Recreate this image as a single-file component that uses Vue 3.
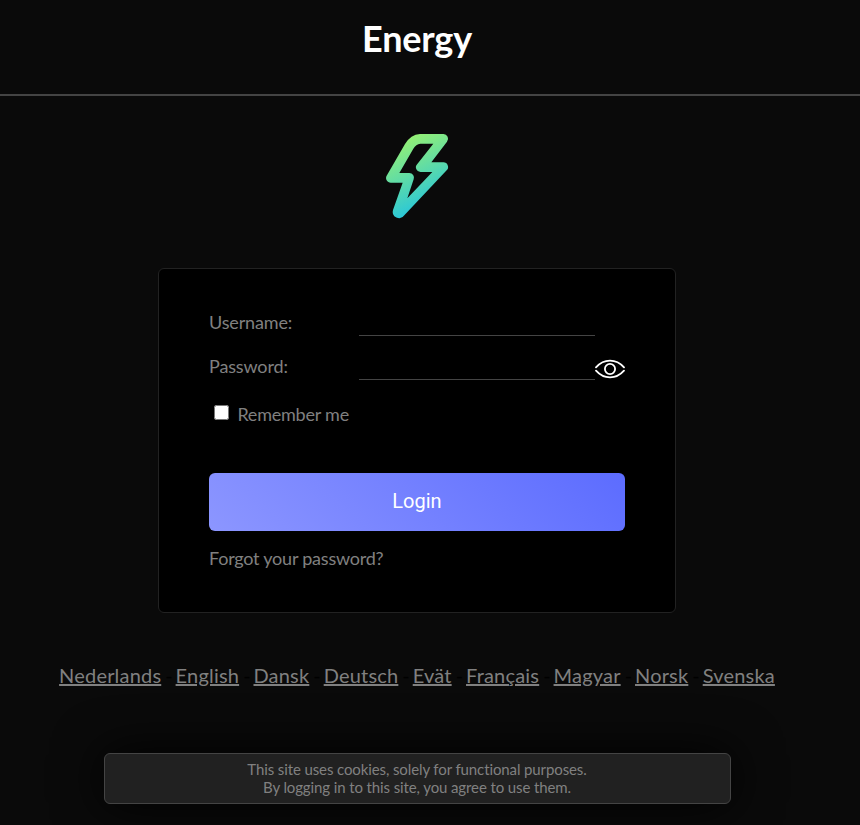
<script setup>
import { ref } from 'vue'

const username = ref('')
const password = ref('')
const remember = ref(false)
const showPassword = ref(false)
const languages = ['Nederlands', 'English', 'Dansk', 'Deutsch', 'Evät', 'Français', 'Magyar', 'Norsk', 'Svenska']
</script>

<template>
  <div class="page">
    <header class="header"><h1>Energy</h1></header>
    <main class="main">
      <svg class="logo" viewBox="0 0 300 330">
        <defs>
          <linearGradient id="bolt" gradientUnits="userSpaceOnUse" x1="85" y1="55" x2="190" y2="265">
            <stop offset="0" stop-color="#9af26f" />
            <stop offset="1" stop-color="#22c4e0" />
          </linearGradient>
        </defs>
        <path
          fill="url(#bolt)"
          fill-rule="evenodd"
          d="M150 42H220A14 14 0 0 1 231 65L184 127H220A14 14 0 0 1 230 151L103 286A19 19 0 0 1 69 270L98 188H62A14 14 0 0 1 50 167L105 72Q122 44 150 42ZM151 71Q138 72 130 86L88 159H118A14 14 0 0 1 131 178L112 235L187 156H153A14 14 0 0 1 142 132L190 71Z"
        />
      </svg>
      <form class="card" @submit.prevent>
        <label class="row">
          <span class="label">Username:</span>
          <input v-model="username" class="field" type="text" />
        </label>
        <div class="row">
          <label class="label" for="password">Password:</label>
          <input id="password" v-model="password" class="field" :type="showPassword ? 'text' : 'password'" />
          <svg class="eye" viewBox="0 0 30 20" @click="showPassword = !showPassword">
            <path d="M1 8.4Q7 1.7 15 1.7T29 8.4M1 11.6Q7 18.3 15 18.3T29 11.6" />
            <circle cx="15" cy="10" r="5.1" />
          </svg>
        </div>
        <label class="remember">
          <input v-model="remember" class="check" type="checkbox" />
          <span>Remember me</span>
        </label>
        <button class="login" type="submit">Login</button>
        <a class="forgot">Forgot your password?</a>
      </form>
      <nav class="languages">
        <template v-for="(name, i) in languages" :key="name">
          <span v-if="i" class="dash"> - </span><a class="language">{{ name }}</a>
        </template>
      </nav>
      <div class="cookies">
        This site uses cookies, solely for functional purposes.<br />
        By logging in to this site, you agree to use them.
      </div>
    </main>
  </div>
</template>

<style>
body {
  background: #0a0a0a;
}
</style>

<style scoped>
.page {
  height: 825px;
  overflow: hidden;
  background: #0a0a0a;
  color: gray;
  font-family: Lato, sans-serif;
  font-size: 18px;
}
.header {
  box-sizing: border-box;
  height: 96px;
  padding: 16px 26px 0 0;
  border-bottom: 2px solid #444;
  text-align: center;
}
h1 {
  margin: 0;
  color: #fff;
  font-size: 36px;
  line-height: 44px;
  font-weight: 700;
  letter-spacing: -0.2px;
}
.main {
  display: flex;
  flex-direction: column;
  align-items: center;
  width: 834px;
  padding-top: 24px;
}
.logo {
  display: block;
  width: 100px;
  height: 110px;
  margin-left: 6px;
}
.card {
  box-sizing: border-box;
  width: 518px;
  height: 345px;
  margin-top: 38px;
  padding: 34px 50px 0;
  border: 1px solid #222;
  border-radius: 6px;
  background: #000;
  letter-spacing: -0.22px;
}
.row {
  display: flex;
  align-items: center;
  height: 33px;
  margin-bottom: 11px;
}
.label {
  width: 150px;
  line-height: 22px;
  padding-top: 5px;
  letter-spacing: -0.14px;
}
.field {
  box-sizing: border-box;
  width: 236px;
  height: 33px;
  padding: 0;
  border: 0;
  border-bottom: 1px solid #444;
  border-radius: 0;
  outline: 0;
  background: transparent;
  color: gray;
  font: inherit;
}
.eye {
  width: 30px;
  height: 20px;
  margin-top: 11px;
  fill: none;
  stroke: #fff;
  stroke-width: 1.8;
  stroke-linecap: round;
}
.remember {
  display: flex;
  align-items: center;
  height: 22px;
  margin-top: 23px;
}
.check {
  width: 15px;
  height: 15px;
  margin: 0 8.4px 3px 5px;
}
.login {
  display: block;
  width: 416px;
  height: 58px;
  margin: 48px 0 16px;
  padding: 0 0 2px;
  border: 0;
  border-radius: 6px;
  background: linear-gradient(45deg, #8c96ff, #5c6cff);
  color: #fff;
  font-family: Roboto, sans-serif;
  font-size: 20px;
}
.forgot {
  display: block;
  line-height: 22px;
}
.languages {
  margin-top: 50px;
  font-size: 20px;
  line-height: 24px;
  white-space: pre;
}
.language {
  letter-spacing: 0.19px;
  text-decoration: underline 2px;
}
.dash {
  color: #000;
  letter-spacing: -1.1px;
}
.cookies {
  box-sizing: border-box;
  width: 627px;
  height: 51px;
  margin-top: 66px;
  padding-top: 6px;
  border: 1px solid #444;
  border-radius: 6px;
  background: #212121;
  box-shadow: 0 0 50px #000;
  font-size: 15px;
  line-height: 18px;
  letter-spacing: -0.11px;
  text-align: center;
}
</style>
